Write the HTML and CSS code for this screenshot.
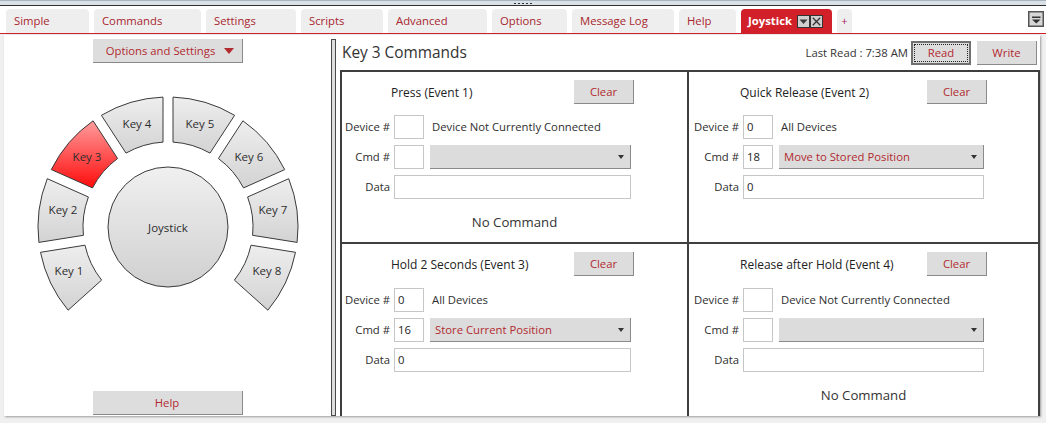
FILE: index.html
```html
<!DOCTYPE html>
<html>
<head>
<meta charset="utf-8">
<title>Joystick</title>
<link rel="stylesheet" href="styles.css">
</head>
<body>
<div class="app">
  <div class="frame"><div class="grip"><i></i><i></i><i></i><i></i><i></i></div></div>
  <div class="tabbar">
    <div class="tab w-simple">Simple</div>
    <div class="tab w-commands">Commands</div>
    <div class="tab w-settings">Settings</div>
    <div class="tab w-scripts">Scripts</div>
    <div class="tab w-advanced">Advanced</div>
    <div class="tab w-options">Options</div>
    <div class="tab w-msglog">Message Log</div>
    <div class="tab w-help">Help</div>
    <div class="tab active">
      <span class="tab-label">Joystick</span>
      <span class="tab-icons">
        <svg width="13" height="13" viewBox="0 0 13 13"><rect x="0.5" y="0.5" width="12" height="12" fill="#cfcfcf" stroke="#333"/><path d="M2.5 4.5h8l-4 4.5z" fill="#3a3a3a"/></svg>
        <svg width="13" height="13" viewBox="0 0 13 13"><rect x="0.5" y="0.5" width="12" height="12" fill="#cfcfcf" stroke="#333"/><path d="M2.8 2.8l7.4 7.4M10.2 2.8l-7.4 7.4" stroke="#333" stroke-width="1.3"/></svg>
      </span>
    </div>
    <div class="tab plus">+</div>
    <div class="overflow">
      <svg width="16" height="16" viewBox="0 0 16 16"><rect x="0.75" y="0.75" width="14.5" height="14.5" fill="#d6d6d6" stroke="#555" stroke-width="1.5"/><rect x="4" y="5.5" width="8.5" height="1.5" fill="#333"/><path d="M4 8.5h8.5l-4.25 4z" fill="#333"/></svg>
    </div>
  </div>

  <div class="workspace">
    <div class="panel">
      <div class="left">
        <div class="btn opts">Options and Settings<span class="tri"></span></div>
        <svg class="wheel" viewBox="-135 -135 270 270" width="270" height="270">
          <defs>
            <linearGradient id="kg" x1="0" y1="0" x2="0" y2="1"><stop offset="0" stop-color="#eeeeee"/><stop offset="1" stop-color="#d3d3d3"/></linearGradient>
            <linearGradient id="kr" x1="0" y1="0" x2="0" y2="1"><stop offset="0" stop-color="#ff9d9d"/><stop offset="1" stop-color="#ff0c0c"/></linearGradient>
            <linearGradient id="jg" x1="0" y1="0" x2="0" y2="1"><stop offset="0" stop-color="#f0f0f0"/><stop offset="1" stop-color="#d0d0d0"/></linearGradient>
          </defs>
          <g stroke="#3a3a3a" stroke-width="1" fill="url(#kg)">
            <path d="M-127.5 25.3 A130 130 0 0 0 -99.9 83.2 L-66.4 53.1 A85 85 0 0 1 -83.0 18.2 Z"/>
            <path d="M-120.7 -48.3 A130 130 0 0 0 -129.1 15.4 L-84.6 8.3 A85 85 0 0 1 -79.6 -30.0 Z"/>
            <path fill="url(#kr)" d="M-74.9 -106.2 A130 130 0 0 0 -116.7 -57.4 L-75.5 -39.1 A85 85 0 0 1 -50.4 -68.5 Z"/>
            <path d="M-5.0 -129.9 A130 130 0 0 0 -66.6 -111.7 L-42.0 -73.9 A85 85 0 0 1 -5.0 -84.9 Z"/>
            <path d="M5.0 -129.9 A130 130 0 0 1 66.6 -111.7 L42.0 -73.9 A85 85 0 0 0 5.0 -84.9 Z"/>
            <path d="M74.9 -106.2 A130 130 0 0 1 116.7 -57.4 L75.5 -39.1 A85 85 0 0 0 50.4 -68.5 Z"/>
            <path d="M120.7 -48.3 A130 130 0 0 1 129.1 15.4 L84.6 8.3 A85 85 0 0 0 79.6 -30.0 Z"/>
            <path d="M127.5 25.3 A130 130 0 0 1 99.9 83.2 L66.4 53.1 A85 85 0 0 0 83.0 18.2 Z"/>
            <circle cx="0" cy="0" r="60" fill="url(#jg)"/>
          </g>
          <g class="wheel-text" text-anchor="middle" dominant-baseline="central">
            <text x="-99" y="43">Key 1</text>
            <text x="-105" y="-18">Key 2</text>
            <text x="-81" y="-71">Key 3</text>
            <text x="-31" y="-104">Key 4</text>
            <text x="32" y="-104">Key 5</text>
            <text x="81" y="-71">Key 6</text>
            <text x="105" y="-18">Key 7</text>
            <text x="99" y="43">Key 8</text>
            <text x="0" y="0">Joystick</text>
          </g>
        </svg>
        <div class="btn help">Help</div>
      </div>

      <div class="splitter"></div>

      <div class="right">
        <div class="header">
          <div class="title">Key 3 Commands</div>
          <div class="lastread">Last Read : 7:38 AM</div>
          <div class="btn read">Read</div>
          <div class="btn write">Write</div>
        </div>
        <div class="grid">
          <div class="cell t l">
            <div class="form">
              <div class="ev-head"><span class="ev-title">Press (Event 1)</span><div class="btn clear">Clear</div></div>
              <div class="lbl">Device #</div><div class="inp num"></div><div class="devtxt">Device Not Currently Connected</div>
              <div class="lbl">Cmd #</div><div class="inp num"></div><div class="sel"><span></span><i class="arr"></i></div>
              <div class="lbl">Data</div><div class="inp data"></div>
            </div>
            <div class="nocmd">No Command</div>
          </div>
          <div class="cell t r">
            <div class="form">
              <div class="ev-head"><span class="ev-title">Quick Release (Event 2)</span><div class="btn clear">Clear</div></div>
              <div class="lbl">Device #</div><div class="inp num">0</div><div class="devtxt">All Devices</div>
              <div class="lbl">Cmd #</div><div class="inp num">18</div><div class="sel"><span>Move to Stored Position</span><i class="arr"></i></div>
              <div class="lbl">Data</div><div class="inp data">0</div>
            </div>
          </div>
          <div class="cell b l">
            <div class="form">
              <div class="ev-head"><span class="ev-title">Hold 2 Seconds (Event 3)</span><div class="btn clear">Clear</div></div>
              <div class="lbl">Device #</div><div class="inp num">0</div><div class="devtxt">All Devices</div>
              <div class="lbl">Cmd #</div><div class="inp num">16</div><div class="sel"><span>Store Current Position</span><i class="arr"></i></div>
              <div class="lbl">Data</div><div class="inp data">0</div>
            </div>
          </div>
          <div class="cell b r">
            <div class="form">
              <div class="ev-head"><span class="ev-title">Release after Hold (Event 4)</span><div class="btn clear">Clear</div></div>
              <div class="lbl">Device #</div><div class="inp num"></div><div class="devtxt">Device Not Currently Connected</div>
              <div class="lbl">Cmd #</div><div class="inp num"></div><div class="sel"><span></span><i class="arr"></i></div>
              <div class="lbl">Data</div><div class="inp data"></div>
            </div>
            <div class="nocmd">No Command</div>
          </div>
        </div>
      </div>
    </div>
  </div>
</div>
</body>
</html>
```

FILE: styles.css
```css
* { box-sizing: border-box; }

body {
  margin: 0;
  width: 1046px;
  height: 423px;
  overflow: hidden;
  background: #ffffff;
  font-family: "Open Sans", "Noto Sans", sans-serif;
  font-size: 11.3px;
  color: #2e2e2e;
}

.app {
  display: flex;
  flex-direction: column;
  height: 423px;
}

/* window frame strip */
.frame {
  height: 6px;
  background: #d9e1e7;
  border-top: 1px solid #a8b5be;
  border-bottom: 1px solid #303030;
  display: flex;
  justify-content: center;
  align-items: center;
}
.grip { display: flex; gap: 2px; }
.grip i { display: block; width: 2px; height: 1px; background: #333; }

/* tab strip */
.tabbar {
  height: 28px;
  padding: 3px 2px 0 6px;
  display: flex;
  align-items: flex-end;
  gap: 5px;
  border-bottom: 1px solid #d0202a;
}
.tab {
  height: 24px;
  padding-left: 8px;
  background: #eeeeee;
  border-radius: 4px 4px 0 0;
  color: #a8262e;
  line-height: 24px;
  white-space: nowrap;
}
.w-simple { width: 83px; }
.w-commands { width: 107px; }
.w-settings { width: 90px; }
.w-scripts { width: 82px; }
.w-advanced { width: 99px; }
.w-options { width: 75px; }
.w-msglog { width: 102px; }
.w-help { width: 57px; }
.tab.active {
  width: 91px;
  padding-left: 7px;
  background: #d2202a;
  color: #ffffff;
  font-weight: 700;
  display: flex;
  align-items: center;
}
.tab-icons { display: flex; gap: 0; margin-left: 5px; }
.tab-icons svg { display: block; }
.tab.plus {
  width: 15px;
  padding-left: 0;
  text-align: center;
  color: #a8205a;
  font-size: 11px;
}
.overflow {
  margin-left: auto;
  margin-bottom: 6px;
  height: 16px;
}
.overflow svg { display: block; }

/* workspace */
.workspace {
  flex: 1;
  background: #f0f0f0;
  padding: 1px 6px 0 4px;
}
.panel {
  width: 1036px;
  height: 381px;
  background: #ffffff;
  box-shadow: 1px 1px 2px rgba(0, 0, 0, 0.35);
  display: flex;
}

.btn {
  height: 24px;
  background: #dddddd;
  color: #b22a30;
  border-right: 1px solid #8a8a8a;
  border-bottom: 1px solid #8a8a8a;
  display: flex;
  align-items: center;
  justify-content: center;
  white-space: nowrap;
}

/* left column */
.left {
  width: 327px;
  display: flex;
  flex-direction: column;
  align-items: center;
  padding: 4px 0 1px 0;
}
.opts { width: 150px; padding-left: 6px; }
.tri {
  display: inline-block;
  margin-left: 9px;
  border-left: 5px solid transparent;
  border-right: 5px solid transparent;
  border-top: 6px solid #b22a30;
}
.wheel { display: block; margin-top: 29px; }
.wheel-text { fill: #2e2e2e; font-size: 11.5px; }
.help { width: 150px; margin-top: auto; }

.splitter {
  width: 5px;
  height: 377px;
  margin-top: 4px;
  background: #dedede;
  border: 1px solid #4a4a4a;
}

/* right column */
.right {
  flex: 1;
  padding-left: 4px;
  display: flex;
  flex-direction: column;
}
.header {
  height: 35px;
  display: flex;
  align-items: center;
}
.title {
  flex: 1;
  margin-left: 2px;
  font-size: 15.4px;
  color: #333333;
}
.lastread { margin-right: 3px; color: #333333; }
.read {
  width: 60px;
  margin-right: 6px;
  border: 2px solid #707070;
  position: relative;
}
.read::after {
  content: "";
  position: absolute;
  inset: 1px;
  border: 1px dotted #222;
}
.write { width: 60px; margin-right: 3px; }

.grid {
  width: 700px;
  height: 346px;
  border: 2px solid #3f3f3f;
  border-bottom: none;
  display: grid;
  grid-template-columns: 347px 349px;
  grid-template-rows: 172px 172px;
}
.cell { padding-top: 8px; }
.cell.b { padding-top: 8px; }
.cell.t { border-bottom: 2px solid #3f3f3f; }
.cell.l { border-right: 2px solid #3f3f3f; }

.form {
  display: grid;
  grid-template-columns: 52px 36px 1fr;
  grid-template-rows: auto;
  grid-auto-rows: 24px;
  row-gap: 6px;
  margin-right: 56px;
}
.cell.b .form { row-gap: 6px; }
.cell.r .form { margin: 0 54px 0 2px; }

.ev-head {
  grid-column: 1 / -1;
  display: flex;
  align-items: center;
  height: 24px;
  margin-bottom: 5px;
}
.cell.b .ev-head { margin-bottom: 6px; }
.ev-title {
  margin-left: 49px;
  font-size: 12px;
  color: #222222;
}
.clear { width: 60px; margin-left: auto; margin-right: -3px; }

.lbl {
  text-align: right;
  padding-right: 4px;
  line-height: 24px;
  white-space: nowrap;
}
.inp {
  height: 24px;
  border: 1px solid #c6c6c6;
  background: #ffffff;
  padding-left: 3px;
  line-height: 22px;
  color: #222222;
}
.inp.num { width: 30px; }
.inp.data { grid-column: 2 / -1; }
.devtxt {
  padding-left: 2px;
  line-height: 24px;
  white-space: nowrap;
}
.sel {
  background: #dcdcdc;
  border-right: 1px solid #8a8a8a;
  border-bottom: 1px solid #8a8a8a;
  display: flex;
  align-items: center;
  padding-left: 5px;
  color: #b22a30;
  white-space: nowrap;
}
.arr {
  margin-left: auto;
  margin-right: 6px;
  border-left: 3.5px solid transparent;
  border-right: 3.5px solid transparent;
  border-top: 4px solid #333;
}
.nocmd {
  margin-top: 13px;
  height: 20px;
  line-height: 20px;
  text-align: center;
  font-size: 13.2px;
  color: #333333;
}
```
